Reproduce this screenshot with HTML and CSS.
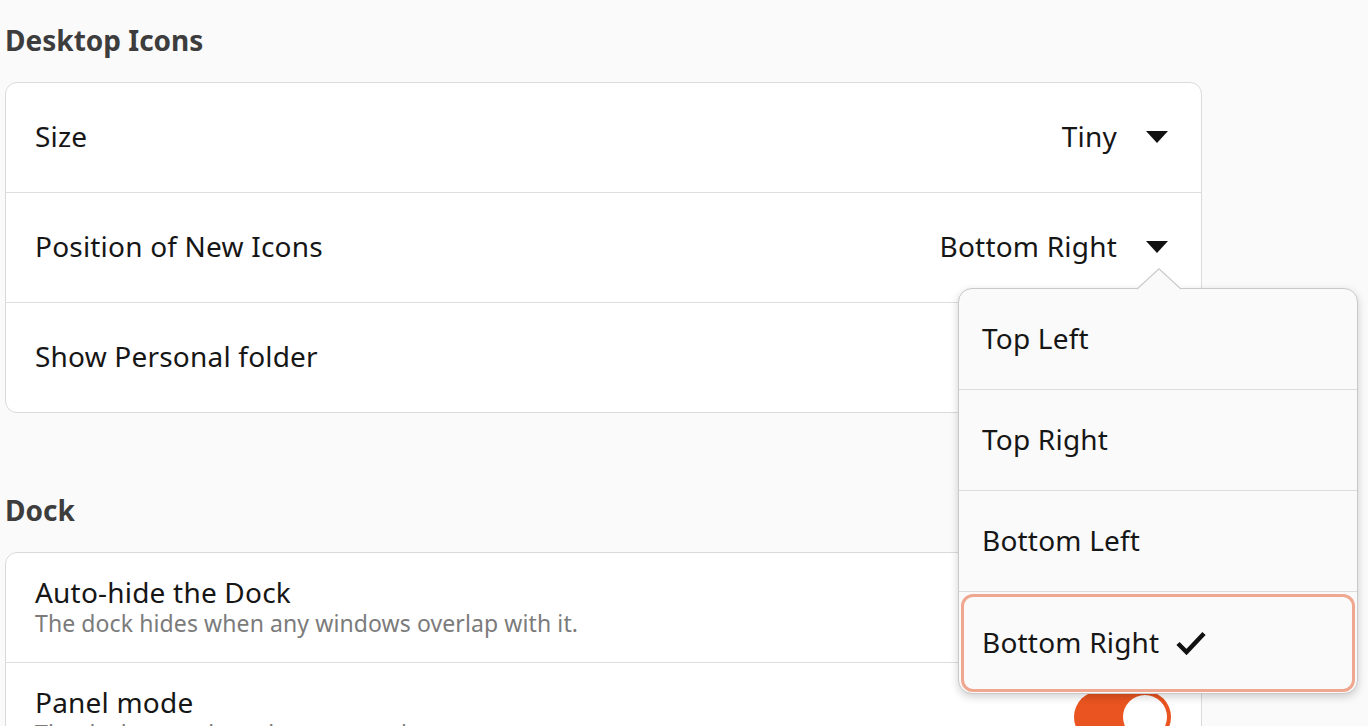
FILE: index.html
```html
<!DOCTYPE html>
<html>
<head>
<meta charset="utf-8">
<link rel="stylesheet" href="styles.css">
</head>
<body>
<div class="page">
  <section class="section">
    <h2 class="section-title">Desktop Icons</h2>
    <div class="card">
      <div class="row">
        <span class="label">Size</span>
        <div class="combo"><span class="combo-value">Tiny</span><svg class="caret" viewBox="0 0 22 12"><path d="M0 0 H22 L11 12 Z"/></svg></div>
      </div>
      <div class="row">
        <span class="label">Position of New Icons</span>
        <div class="combo"><span class="combo-value">Bottom Right</span><svg class="caret" viewBox="0 0 22 12"><path d="M0 0 H22 L11 12 Z"/></svg></div>
      </div>
      <div class="row">
        <span class="label">Show Personal folder</span>
        <div class="switch on"><span class="knob"></span></div>
      </div>
    </div>
  </section>
  <section class="section dock">
    <h2 class="section-title">Dock</h2>
    <div class="card">
      <div class="row">
        <div class="texts">
          <span class="label">Auto-hide the Dock</span>
          <span class="sub">The dock hides when any windows overlap with it.</span>
        </div>
        <div class="switch on"><span class="knob"></span></div>
      </div>
      <div class="row">
        <div class="texts">
          <span class="label">Panel mode</span>
          <span class="sub">The dock extends to the screen edge.</span>
        </div>
        <div class="switch on"><span class="knob"></span></div>
      </div>
    </div>
  </section>

  <div class="popover">
    <svg class="popover-arrow" viewBox="0 0 44 22"><path d="M0 21 L22 0.8 L44 21" /></svg>
    <div class="item">Top Left</div>
    <div class="item">Top Right</div>
    <div class="item">Bottom Left</div>
    <div class="item selected">Bottom Right<svg class="check" viewBox="0 0 30 25"><path d="M2 13.5 L10.5 22 L28 3.5"/></svg></div>
  </div>
</div>
</body>
</html>
```

FILE: styles.css
```css
* { box-sizing: border-box; }
html, body { margin: 0; padding: 0; }
body {
  background: #fafafa;
  font-family: "Noto Sans", "Open Sans", sans-serif;
  width: 1368px;
  height: 726px;
  overflow: hidden;
}
.page {
  position: relative;
  padding-left: 5px;
  width: 1202px;
}
.section-title {
  margin: 0;
  height: 82px;
  line-height: 80px;
  font-size: 28px;
  font-weight: 700;
  color: #3d3d3d;
}
.dock { margin-top: 57px; }
.card {
  background: #ffffff;
  border: 1px solid #dadada;
  border-radius: 12px;
}
.row {
  height: 110px;
  display: flex;
  align-items: center;
  justify-content: space-between;
  padding: 0 33px 3px 29px;
  border-top: 1px solid #dedede;
}
.row:first-child { border-top: none; height: 109px; }
.label {
  font-size: 28px;
  letter-spacing: 0.2px;
  color: #161616;
}
.texts { display: flex; flex-direction: column; margin-top: 3px; }
.texts .label { line-height: 31px; }
.sub {
  font-size: 23px;
  letter-spacing: 0.1px;
  color: #7b7b7b;
  line-height: 30px;
}
.combo {
  display: flex;
  align-items: center;
  gap: 29px;
}
.combo-value { font-size: 28px; letter-spacing: 0.2px; color: #161616; }
.caret { width: 22px; height: 12px; fill: #111; margin-top: 2px; }
.switch {
  width: 97px;
  height: 52px;
  border-radius: 26px;
  background: #e95420;
  position: relative;
  margin-right: -3px;
  margin-bottom: -2px;
}
.knob {
  position: absolute;
  right: 4px;
  top: 4px;
  width: 44px;
  height: 44px;
  border-radius: 50%;
  background: #fff;
}
.popover {
  position: absolute;
  left: 958px;
  top: 288px;
  width: 400px;
  height: 406px;
  background: #fafafa;
  border: 1px solid #c9c9c9;
  border-radius: 14px;
  box-shadow: 0 3px 8px rgba(0,0,0,0.18);
  display: flex;
  flex-direction: column;
  padding: 0 1px 1px;
}
.popover-arrow {
  position: absolute;
  left: 178px;
  top: -21px;
  width: 44px;
  height: 22px;
  fill: #fafafa;
  stroke: #c9c9c9;
  stroke-width: 1.2;
}
.item {
  height: 102px;
  display: flex;
  align-items: center;
  font-size: 28px;
  letter-spacing: 0.2px;
  color: #161616;
  border-bottom: 1px solid #dcdcdc;
  margin: 0 -1px;
  padding: 0 0 2px 23px;
}
.item:first-of-type { height: 101px; }
.item.selected {
  border: 3px solid #f0a78f;
  border-radius: 12px;
  margin: 2px 1px 0;
  height: 98px;
  padding-left: 18px;
}
.check {
  width: 30px;
  height: 25px;
  margin-left: 17px;
  fill: none;
  stroke: #111;
  stroke-width: 4.5;
}
```
